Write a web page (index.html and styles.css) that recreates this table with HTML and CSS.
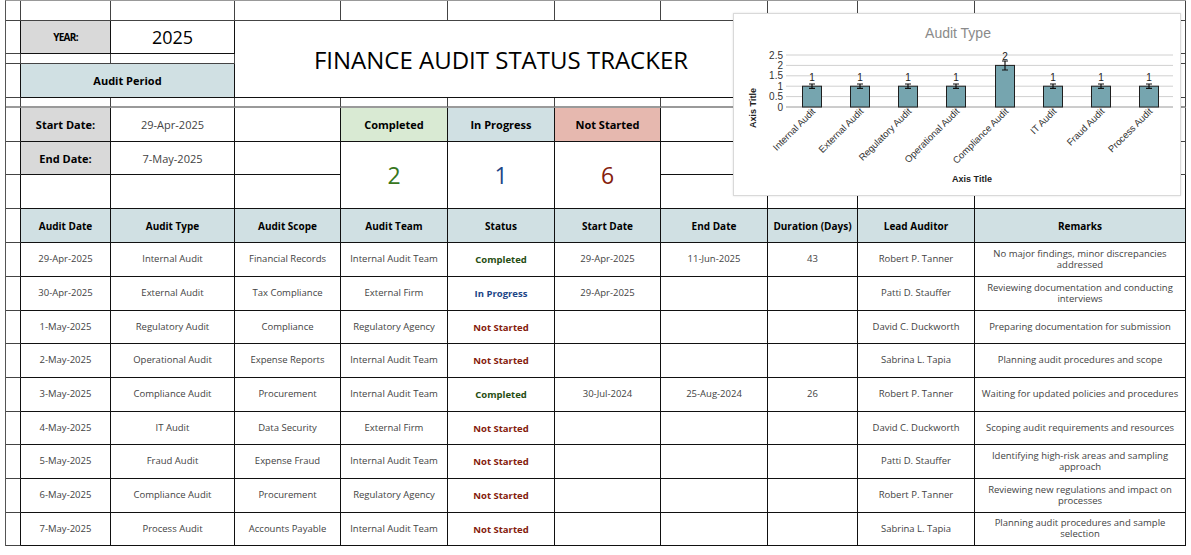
FILE: index.html
```html
<!DOCTYPE html>
<html lang="en">
<head>
<meta charset="utf-8">
<title>Finance Audit Status Tracker</title>
<link rel="stylesheet" href="styles.css">
</head>
<body>
<div class="sheet">
  <div class="grid">
    <!-- row 1 -->
    <div class="c"></div><div class="c"></div><div class="c"></div><div class="c"></div><div class="c"></div><div class="c"></div><div class="c"></div><div class="c"></div><div class="c"></div><div class="c"></div><div class="c"></div>
    <!-- row 2 -->
    <div class="c edge"></div>
    <div class="c k grey year">YEAR:</div>
    <div class="c k big">2025</div>
    <div class="c title">FINANCE AUDIT STATUS TRACKER</div>
    <div class="c"></div><div class="c"></div><div class="c"></div>
    <!-- row 3 -->
    <div class="c"></div><div class="c"></div><div class="c"></div>
    <div class="c"></div><div class="c"></div><div class="c"></div>
    <!-- row 4 -->
    <div class="c edge"></div>
    <div class="c k blue span2 label">Audit Period</div>
    <div class="c"></div><div class="c"></div><div class="c"></div>
    <!-- row 5 -->
    <div class="c gap"></div><div class="c gap"></div><div class="c gap"></div><div class="c gap"></div><div class="c gap"></div><div class="c gap"></div><div class="c gap"></div><div class="c gap"></div><div class="c gap"></div><div class="c gap"></div><div class="c gap"></div>
    <!-- row 6 -->
    <div class="c edge"></div>
    <div class="c k grey label">Start Date:</div>
    <div class="c k info">29-Apr-2025</div>
    <div class="c k"></div>
    <div class="c k green label">Completed</div>
    <div class="c k blue label">In Progress</div>
    <div class="c k red label">Not Started</div>
    <div class="c k"></div>
    <div class="c"></div><div class="c"></div><div class="c"></div>
    <!-- row 7 -->
    <div class="c edge"></div>
    <div class="c k grey label">End Date:</div>
    <div class="c k info">7-May-2025</div>
    <div class="c k"></div>
    <div class="c k count done">2</div>
    <div class="c k count prog">1</div>
    <div class="c k count todo">6</div>
    <div class="c k"></div>
    <div class="c"></div><div class="c"></div><div class="c"></div>
    <!-- row 8 -->
    <div class="c edge"></div>
    <div class="c k"></div>
    <div class="c k"></div>
    <div class="c k"></div>
    <div class="c k"></div>
    <div class="c k"></div><div class="c k"></div><div class="c k"></div>
    <!-- row 9 header -->
    <div class="c edge"></div>
    <div class="c k blue th">Audit Date</div>
    <div class="c k blue th">Audit Type</div>
    <div class="c k blue th">Audit Scope</div>
    <div class="c k blue th">Audit Team</div>
    <div class="c k blue th">Status</div>
    <div class="c k blue th">Start Date</div>
    <div class="c k blue th">End Date</div>
    <div class="c k blue th">Duration (Days)</div>
    <div class="c k blue th">Lead Auditor</div>
    <div class="c k blue th">Remarks</div>
    <!-- data -->
    <div class="c edge"></div>
    <div class="c k td">29-Apr-2025</div><div class="c k td">Internal Audit</div><div class="c k td">Financial Records</div><div class="c k td">Internal Audit Team</div><div class="c k st done">Completed</div><div class="c k td">29-Apr-2025</div><div class="c k td">11-Jun-2025</div><div class="c k td">43</div><div class="c k td">Robert P. Tanner</div><div class="c k td rm">No major findings, minor discrepancies addressed</div>
    <div class="c edge"></div>
    <div class="c k td">30-Apr-2025</div><div class="c k td">External Audit</div><div class="c k td">Tax Compliance</div><div class="c k td">External Firm</div><div class="c k st prog">In Progress</div><div class="c k td">29-Apr-2025</div><div class="c k td"></div><div class="c k td"></div><div class="c k td">Patti D. Stauffer</div><div class="c k td rm">Reviewing documentation and conducting interviews</div>
    <div class="c edge"></div>
    <div class="c k td">1-May-2025</div><div class="c k td">Regulatory Audit</div><div class="c k td">Compliance</div><div class="c k td">Regulatory Agency</div><div class="c k st todo">Not Started</div><div class="c k td"></div><div class="c k td"></div><div class="c k td"></div><div class="c k td">David C. Duckworth</div><div class="c k td rm">Preparing documentation for submission</div>
    <div class="c edge"></div>
    <div class="c k td">2-May-2025</div><div class="c k td">Operational Audit</div><div class="c k td">Expense Reports</div><div class="c k td">Internal Audit Team</div><div class="c k st todo">Not Started</div><div class="c k td"></div><div class="c k td"></div><div class="c k td"></div><div class="c k td">Sabrina L. Tapia</div><div class="c k td rm">Planning audit procedures and scope</div>
    <div class="c edge"></div>
    <div class="c k td">3-May-2025</div><div class="c k td">Compliance Audit</div><div class="c k td">Procurement</div><div class="c k td">Internal Audit Team</div><div class="c k st done">Completed</div><div class="c k td">30-Jul-2024</div><div class="c k td">25-Aug-2024</div><div class="c k td">26</div><div class="c k td">Robert P. Tanner</div><div class="c k td rm">Waiting for updated policies and procedures</div>
    <div class="c edge"></div>
    <div class="c k td">4-May-2025</div><div class="c k td">IT Audit</div><div class="c k td">Data Security</div><div class="c k td">External Firm</div><div class="c k st todo">Not Started</div><div class="c k td"></div><div class="c k td"></div><div class="c k td"></div><div class="c k td">David C. Duckworth</div><div class="c k td rm">Scoping audit requirements and resources</div>
    <div class="c edge"></div>
    <div class="c k td">5-May-2025</div><div class="c k td">Fraud Audit</div><div class="c k td">Expense Fraud</div><div class="c k td">Internal Audit Team</div><div class="c k st todo">Not Started</div><div class="c k td"></div><div class="c k td"></div><div class="c k td"></div><div class="c k td">Patti D. Stauffer</div><div class="c k td rm">Identifying high-risk areas and sampling approach</div>
    <div class="c edge"></div>
    <div class="c k td">6-May-2025</div><div class="c k td">Compliance Audit</div><div class="c k td">Procurement</div><div class="c k td">Regulatory Agency</div><div class="c k st todo">Not Started</div><div class="c k td"></div><div class="c k td"></div><div class="c k td"></div><div class="c k td">Robert P. Tanner</div><div class="c k td rm">Reviewing new regulations and impact on processes</div>
    <div class="c edge"></div>
    <div class="c k td">7-May-2025</div><div class="c k td">Process Audit</div><div class="c k td">Accounts Payable</div><div class="c k td">Internal Audit Team</div><div class="c k st todo">Not Started</div><div class="c k td"></div><div class="c k td"></div><div class="c k td"></div><div class="c k td">Sabrina L. Tapia</div><div class="c k td rm">Planning audit procedures and sample selection</div>
  </div>

  <div class="chart">
    <svg width="448" height="183" viewBox="0 0 448 183" xmlns="http://www.w3.org/2000/svg">
      <text x="224" y="24" class="ct">Audit Type</text>
      <g class="gl">
        <line x1="52" y1="41" x2="439" y2="41"/>
        <line x1="52" y1="51.4" x2="439" y2="51.4"/>
        <line x1="52" y1="61.8" x2="439" y2="61.8"/>
        <line x1="52" y1="72.2" x2="439" y2="72.2"/>
        <line x1="52" y1="82.6" x2="439" y2="82.6"/>
      </g>
      <line x1="52" y1="93" x2="439" y2="93" class="ax"/>
      <g class="yl">
        <text x="49" y="44.5">2.5</text>
        <text x="49" y="54.9">2</text>
        <text x="49" y="65.3">1.5</text>
        <text x="49" y="75.7">1</text>
        <text x="49" y="86.1">0.5</text>
        <text x="49" y="96.5">0</text>
      </g>
      <g class="bar">
        <rect x="68.5" y="72.2" width="19" height="20.8"/>
        <rect x="116.5" y="72.2" width="19" height="20.8"/>
        <rect x="164.5" y="72.2" width="19" height="20.8"/>
        <rect x="212.5" y="72.2" width="19" height="20.8"/>
        <rect x="261.5" y="51.4" width="19" height="41.6"/>
        <rect x="309.5" y="72.2" width="19" height="20.8"/>
        <rect x="357.5" y="72.2" width="19" height="20.8"/>
        <rect x="405.5" y="72.2" width="19" height="20.8"/>
      </g>
      <g class="err">
        <path d="M78 70v4.4M75 70h6M75 74.4h6"/>
        <path d="M126 70v4.4M123 70h6M123 74.4h6"/>
        <path d="M174 70v4.4M171 70h6M171 74.4h6"/>
        <path d="M222 70v4.4M219 70h6M219 74.4h6"/>
        <path d="M271 47v9M268 47h6M268 56h6"/>
        <path d="M319 70v4.4M316 70h6M316 74.4h6"/>
        <path d="M367 70v4.4M364 70h6M364 74.4h6"/>
        <path d="M415 70v4.4M412 70h6M412 74.4h6"/>
      </g>
      <g class="dl">
        <text x="78" y="67">1</text>
        <text x="126" y="67">1</text>
        <text x="174" y="67">1</text>
        <text x="222" y="67">1</text>
        <text x="271" y="46">2</text>
        <text x="319" y="67">1</text>
        <text x="367" y="67">1</text>
        <text x="415" y="67">1</text>
      </g>
      <g class="xl">
        <text transform="translate(82 98) rotate(-45)">Internal Audit</text>
        <text transform="translate(130 98) rotate(-45)">External Audit</text>
        <text transform="translate(178 98) rotate(-45)">Regulatory Audit</text>
        <text transform="translate(226 98) rotate(-45)">Operational Audit</text>
        <text transform="translate(275 98) rotate(-45)">Compliance Audit</text>
        <text transform="translate(323 98) rotate(-45)">IT Audit</text>
        <text transform="translate(371 98) rotate(-45)">Fraud Audit</text>
        <text transform="translate(419 98) rotate(-45)">Process Audit</text>
      </g>
      <text x="238" y="168" class="at">Axis Title</text>
      <text transform="translate(22 94) rotate(-90)" class="at">Axis Title</text>
    </svg>
  </div>
</div>
</body>
</html>
```
FILE: styles.css
```css
* { box-sizing: border-box; }
html, body { margin: 0; padding: 0; background: #fff; }
body { font-family: "Open Sans", "Liberation Sans", sans-serif; color: #434343; }

.sheet { position: relative; width: 1191px; height: 555px; padding-left: 5px; }

.grid {
  display: grid;
  grid-template-columns: 15px 90px 124px 106px 107px 107px 106px 107px 90px 117px 211px;
  grid-template-rows: 20px 33px 10px 34px 10px 34px 33px 34px 34px 34px 34px 33px 34px 34px 33px 34px 34px 33px;
  border-left: 1px solid #555;
  border-top: 1px solid #999;
  width: 1181px;
}

.c {
  border-right: 1px solid #444;
  border-bottom: 1px solid #444;
  display: flex;
  align-items: center;
  justify-content: center;
  text-align: center;
  overflow: hidden;
}
.k { border-color: #111; }
.edge { border-right-color: #111; }
.gap { border-bottom: 2px solid #9a9a9a; }

.grey { background: #d9d9d9; }
.blue { background: #d0e0e3; }
.green { background: #d9ead3; }
.red { background: #e6b8af; }

.span2 { grid-column: span 2; }

.year { font-weight: 700; font-size: 10px; color: #000; letter-spacing: -0.7px; }
.big { font-size: 18px; font-weight: 500; color: #000; }
.title {
  grid-column: span 5;
  grid-row: span 3;
  font-size: 24px;
  font-weight: 500;
  color: #000;
  border-bottom-color: #111;
}
.label { font-size: 11px; font-weight: 700; color: #000; }
.info { font-size: 11px; color: #434343; }
.count { grid-row: span 2; font-size: 23px; font-weight: 400; }
.count.done { color: #38761d; }
.count.prog { color: #1c4587; }
.count.todo { color: #85200c; }

.th { font-size: 10px; font-weight: 700; color: #000; }
.td { font-size: 9.5px; color: #434343; line-height: 1.15; padding: 0 4px; }
.st { font-size: 9.5px; font-weight: 700; }
.st.done { color: #274e13; }
.st.prog { color: #1c4587; }
.st.todo { color: #85200c; }

.chart {
  position: absolute;
  left: 733px;
  top: 13px;
  width: 448px;
  height: 183px;
  background: #fff;
  border: 1px solid #d9d9d9;
  box-shadow: 0 0 2px rgba(0,0,0,0.12);
}
.chart svg { display: block; font-family: "Liberation Sans", Arial, sans-serif; }
.chart .ct { font-size: 14px; fill: #8a8a8a; text-anchor: middle; }
.chart .gl line { stroke: #d0d0d0; stroke-width: 1; }
.chart .ax { stroke: #9a9a9a; stroke-width: 1; }
.chart .yl text { font-size: 10px; fill: #333; text-anchor: end; }
.chart .bar rect { fill: #76a5af; stroke: #1f1f1f; stroke-width: 1; }
.chart .err path { stroke: #111; stroke-width: 1.2; fill: none; }
.chart .dl text { font-size: 10px; fill: #222; text-anchor: middle; }
.chart .xl text { font-size: 9.5px; fill: #333; text-anchor: end; }
.chart .at { font-size: 9px; font-weight: 700; fill: #222; text-anchor: middle; }
```
